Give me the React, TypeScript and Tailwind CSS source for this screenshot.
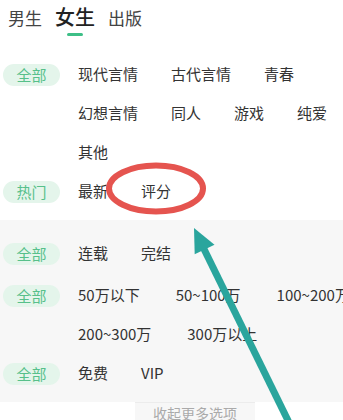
import React from "react";

const Pill = ({ text }: { text: string }) => (
  <div className="w-[78px] h-[39px] flex items-center shrink-0">
    <div className="ml-[3px] w-[57px] h-[22px] rounded-full bg-[#e4f5eb] text-[#57c08a] text-[15px] leading-none flex items-center justify-center">
      {text}
    </div>
  </div>
);

const Group = ({
  label,
  lines,
  className = "",
  gapClass = "gap-x-[33px]",
}: {
  label: string;
  lines: string[][];
  className?: string;
  gapClass?: string;
}) => (
  <div className={"flex " + className}>
    <Pill text={label} />
    <div className="flex flex-col">
      {lines.map((line, i) => (
        <div key={i} className={"h-[39px] flex items-center whitespace-nowrap text-[15px] text-[#333] " + gapClass}>
          {line.map((t) => (
            <span key={t}>{t}</span>
          ))}
        </div>
      ))}
    </div>
  </div>
);

export default function App() {
  return (
    <div className="relative w-[343px] h-[420px] overflow-hidden bg-white font-['Noto_Sans_CJK_SC','Noto_Sans',sans-serif]">
      {/* top tabs */}
      <div className="h-[55px] flex items-start pl-[8px] pt-[3px] gap-x-[13px]">
        <span className="text-[17px] leading-[28px] text-[#444] mt-[1px]">男生</span>
        <div className="flex flex-col items-center">
          <span className="text-[20px] leading-[28px] text-[#222] font-medium">女生</span>
          <div className="w-[16px] h-[3px] rounded-full bg-[#3dbf87] mt-[2px]" />
        </div>
        <span className="text-[17px] leading-[28px] text-[#444] mt-[1px]">出版</span>
      </div>

      {/* upper section */}
      <div className="pb-[9px]">
        <Group
          label="全部"
          lines={[
            ["现代言情", "古代言情", "青春"],
            ["幻想言情", "同人", "游戏", "纯爱"],
            ["其他"],
          ]}
        />
        <Group label="热门" lines={[["最新", "评分"]]} />
      </div>

      {/* gray section */}
      <div className="bg-[#f7f7f7] pt-[14px] pb-[9px]">
        <Group label="全部" lines={[["连载", "完结"]]} />
        <Group
          label="全部"
          className="mt-[3px]"
          gapClass="gap-x-[36px]"
          lines={[
            ["50万以下", "50~100万", "100~200万"],
            ["200~300万", "300万以上"],
          ]}
        />
        <Group label="全部" lines={[["免费", "VIP"]]} />
      </div>

      {/* bottom collapse tab */}
      <div className="flex h-[30px]">
        <div className="w-[135px]" />
        <div className="w-[120px] bg-[#f7f7f7] border-t border-[#ececec] flex justify-center">
          <span className="text-[14px] leading-[20px] text-[#aaa]">收起更多选项</span>
        </div>
      </div>

      {/* annotation overlay */}
      <svg
        className="absolute inset-0 pointer-events-none"
        width="343"
        height="420"
        viewBox="0 0 343 420"
      >
        <ellipse cx="156" cy="188.5" rx="47" ry="23" fill="none" stroke="#e5544f" strokeWidth="6" />
        <line x1="203" y1="247" x2="300" y2="445" stroke="#2aa59d" strokeWidth="7" />
        <polygon points="194,228 214.5,244.7 194.7,254.3" fill="#2aa59d" />
      </svg>
    </div>
  );
}
